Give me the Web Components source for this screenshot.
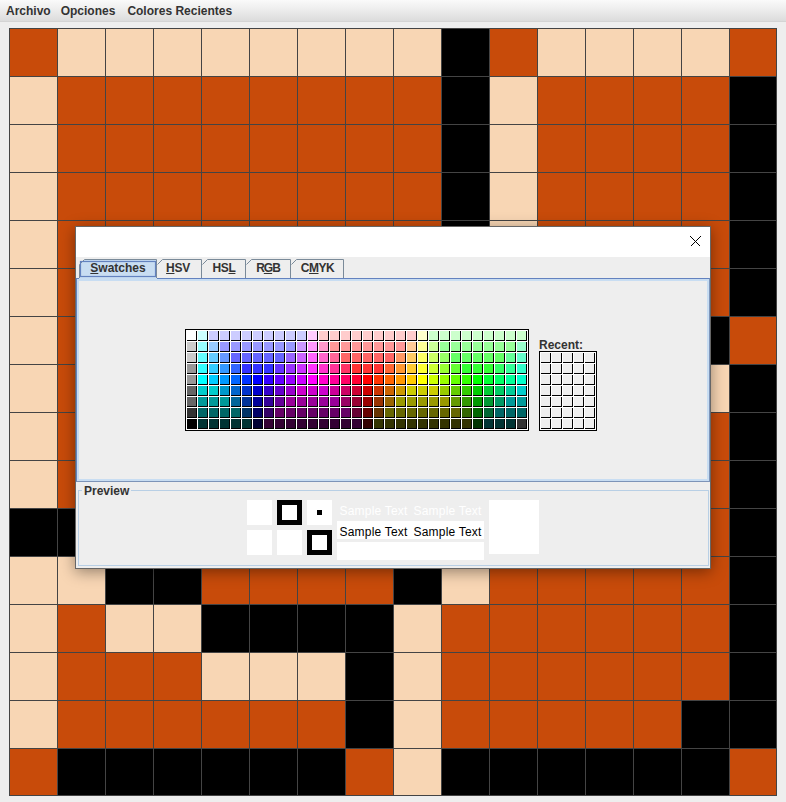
<!DOCTYPE html>
<html lang="es">
<head>
<meta charset="utf-8">
<title>Colores</title>
<style>
  html, body {
    margin: 0;
    background: #eeeeee;
    font-family: "Liberation Sans", Arial, sans-serif;
    font-size: 12px;
    color: #333333;
  }
  body {
    width: 786px;
    height: 802px;
    overflow: hidden;
    position: relative;
  }
</style>
</head>
<body>
  <app-menubar>
    <menu-label>Archivo</menu-label>
    <menu-label>Opciones</menu-label>
    <menu-label style="margin-left: 2px">Colores Recientes</menu-label>
  </app-menubar>

  <pixel-board></pixel-board>

  <color-dialog>
    <color-tabs slot="tabs"></color-tabs>
    <swatch-panel slot="panel"></swatch-panel>
    <color-preview slot="preview"></color-preview>
  </color-dialog>

<script>
  class AppMenubar extends HTMLElement {
    constructor() {
      super()
      this.attachShadow({ mode: "open" })
      this.shadowRoot.innerHTML = `
        <style>
          :host {
            display: flex;
            height: 21px;
            padding-left: 6px;
            gap: 10px;
            align-items: center;
            box-sizing: content-box;
            background: linear-gradient(#fafafa, #f0f0f0 35%, #dcdcdc);
            border-bottom: 1px solid #d4d4d4;
          }
        </style>
        <slot></slot>
      `
    }
  }
  customElements.define("app-menubar", AppMenubar)

  class MenuLabel extends HTMLElement {
    constructor() {
      super()
      this.attachShadow({ mode: "open" })
      this.shadowRoot.innerHTML = `
        <style>
          :host {
            display: block;
            font-weight: bold;
            font-size: 12px;
            color: #333;
          }
        </style>
        <slot></slot>
      `
    }
  }
  customElements.define("menu-label", MenuLabel)

  // O naranja, P crema, K negro. Lo que queda bajo el dialogo va en naranja
  const BOARD = [
    "OPPPPPPPPKOPPPPO",
    "POOOOOOOOKPOOOOK",
    "POOOOOOOOKPOOOOK",
    "POOOOOOOOKPOOOOK",
    "POOOOOOOOKPOOOOK",
    "POOOOOOOOKPOOOOK",
    "POOOOOOOOOOOOOKO",
    "POOOOOOOOOOOOOPK",
    "POOOOOOOOOOOOOOK",
    "POOOOOOOOOOOOOOK",
    "KKOOOOOOOOOOOOOK",
    "PPKKOOOOKPOOOOOK",
    "POPPKKKKPOOOOOOK",
    "POOOPPPKPOOOOOOK",
    "POOOOOOKPOOOOOKK",
    "OKKKKKKOPKKKKKKO"
  ]

  class PixelBoard extends HTMLElement {
    constructor() {
      super()
      this.attachShadow({ mode: "open" })
      let cells = ""
      BOARD.forEach((row, y) => {
        row.split("").forEach((c, x) => {
          const edge = (x === 15 ? " r" : "") + (y === 15 ? " b" : "")
          cells += `<div class="c ${c}${edge}"></div>`
        })
      })
      this.shadowRoot.innerHTML = `
        <style>
          :host {
            display: grid;
            grid-template-columns: repeat(16, 48px);
            grid-auto-rows: 48px;
            margin: 6px 0 0 9px;
            width: 768px;
          }
          .c {
            box-sizing: border-box;
            border-left: 1px solid #444;
            border-top: 1px solid #444;
          }
          .r { border-right: 1px solid #444; }
          .b { border-bottom: 1px solid #444; }
          .O { background: #c84b0a; }
          .P { background: #f8d6b4; }
          .K { background: #000; }
        </style>
        ${cells}
      `
    }
  }
  customElements.define("pixel-board", PixelBoard)

  class ColorDialog extends HTMLElement {
    constructor() {
      super()
      this.attachShadow({ mode: "open" })
      this.shadowRoot.innerHTML = `
        <style>
          :host {
            display: block;
            position: absolute;
            left: 75px;
            top: 226px;
            width: 634px;
            height: 341px;
            border: 1px solid #666;
            background: #eee;
            box-shadow: 0 3px 14px rgba(0, 0, 0, 0.4);
          }
          .title {
            box-sizing: border-box;
            height: 30px;
            background: #fff;
            display: flex;
            justify-content: flex-end;
            align-items: flex-start;
            padding: 9px 9px 0 0;
          }
          svg { display: block; }
        </style>
        <div class="title">
          <svg width="11" height="11" viewBox="0 0 11 11" shape-rendering="crispEdges">
            <path d="M0.5 0.5 L10.5 10.5 M10.5 0.5 L0.5 10.5" stroke="#000" stroke-width="1" fill="none"/>
          </svg>
        </div>
        <slot name="tabs"></slot>
        <slot name="panel"></slot>
        <slot name="preview"></slot>
      `
    }
  }
  customElements.define("color-dialog", ColorDialog)

  class ColorTab extends HTMLElement {
    constructor() {
      super()
      this.attachShadow({ mode: "open" })
    }
    connectedCallback() {
      const w = Number(this.getAttribute("w"))
      const on = this.hasAttribute("selected")
      const h = on ? 22 : 19
      const left = on ? "M0.5 19 L0.5 5.5" : "M0.5 5.5"
      this.shadowRoot.innerHTML = `
        <style>
          :host {
            display: block;
            position: relative;
            width: ${w}px;
            height: ${h}px;
            margin-bottom: ${on ? -3 : 0}px;
            z-index: ${on ? 1 : 0};
          }
          svg { position: absolute; left: 0; top: 0; }
          .t {
            position: relative;
            font-weight: bold;
            font-size: 12px;
            line-height: 19px;
            text-align: center;
            color: #333;
          }
        </style>
        <svg width="${w}" height="${h}">
          <path d="M0 ${h} L0 6 L6 0 L${w} 0 L${w} ${h} Z" fill="${on ? "#c8ddf2" : "#eee"}"/>
          <path d="${left} L5.5 0.5 L${w - 0.5} 0.5 L${w - 0.5} 19" fill="none" stroke="#7a8a99"/>
          ${on ? `<rect x="1.5" y="2.5" width="${w - 3}" height="15" fill="none" stroke="#6382bf" stroke-width="1.2"/>` : ""}
        </svg>
        <div class="t"><slot></slot></div>
      `
    }
  }
  customElements.define("color-tab", ColorTab)

  class ColorTabs extends HTMLElement {
    constructor() {
      super()
      this.attachShadow({ mode: "open" })
      this.shadowRoot.innerHTML = `
        <style>
          :host {
            display: flex;
            align-items: flex-start;
            height: 19px;
            padding: 2px 0 0 3px;
            position: relative;
          }
        </style>
        <color-tab w="78" selected><u>S</u>watches</color-tab>
        <color-tab w="45" style="letter-spacing: -0.3px; text-indent: -3px"><u>H</u>SV</color-tab>
        <color-tab w="44" style="letter-spacing: -0.4px">HS<u>L</u></color-tab>
        <color-tab w="45" style="letter-spacing: -1px; text-indent: -1px">R<u>G</u>B</color-tab>
        <color-tab w="53" style="letter-spacing: -0.5px">C<u>M</u>YK</color-tab>
      `
    }
  }
  customElements.define("color-tabs", ColorTabs)

  // Paleta de swatches, fila a fila, 31 columnas
  function rep(c, n) { return Array(n).fill(c) }
  const PALETTE = [
    ["fff", "cff", ...rep("ccf", 9), "fcf", ...rep("fcc", 9), "ffc", ...rep("cfc", 9)],
    ["ccc", "9ff", "9cf", ...rep("99f", 7), "c9f", "f9f", "f9c", ...rep("f99", 7), "fc9", "ff9", "cf9", ...rep("9f9", 7), "9fc"],
    ["ccc", "6ff", "6cf", "69f", ...rep("66f", 5), "96f", "c6f", "f6f", "f6c", "f69", ...rep("f66", 5), "f96", "fc6", "ff6", "cf6", "9f6", ...rep("6f6", 5), "6f9", "6fc"],
    ["999", "3ff", "3cf", "39f", "36f", ...rep("33f", 3), "63f", "93f", "c3f", "f3f", "f3c", "f39", "f36", ...rep("f33", 3), "f63", "f93", "fc3", "ff3", "cf3", "9f3", "6f3", ...rep("3f3", 3), "3f6", "3f9", "3fc"],
    ["999", "0ff", "0cf", "09f", "06f", "03f", "00f", "30f", "60f", "90f", "c0f", "f0f", "f0c", "f09", "f06", "f03", "f00", "f30", "f60", "f90", "fc0", "ff0", "cf0", "9f0", "6f0", "3f0", "0f0", "0f3", "0f6", "0f9", "0fc"],
    ["666", "0cc", "0cc", "09c", "06c", "03c", "00c", "30c", "60c", "90c", "c0c", "c0c", "c0c", "c09", "c06", "c03", "c00", "c30", "c60", "c90", "cc0", "cc0", "cc0", "9c0", "6c0", "3c0", "0c0", "0c3", "0c6", "0c9", "0cc"],
    ["666", ...rep("099", 3), "069", "039", "009", "309", "609", ...rep("909", 5), "906", "903", "900", "930", "960", ...rep("990", 5), "690", "390", "090", "093", "096", "099", "099"],
    ["333", ...rep("066", 4), "036", "006", "306", ...rep("606", 7), "603", "600", "630", ...rep("660", 7), "360", "060", "063", "066", "066", "066"],
    ["000", ...rep("033", 5), "003", ...rep("303", 9), "300", ...rep("330", 9), "030", "033", "033", "033", "333"]
  ]

  class SwatchGrid extends HTMLElement {
    constructor() {
      super()
      this.attachShadow({ mode: "open" })
    }
    connectedCallback() {
      const cols = Number(this.getAttribute("cols"))
      const rows = Number(this.getAttribute("rows"))
      const flat = this.hasAttribute("palette") ? PALETTE.flat() : rep("eee", cols * rows)
      const cells = flat.map(c => `<i style="background:#${c}"></i>`).join("")
      this.shadowRoot.innerHTML = `
        <style>
          :host {
            display: grid;
            grid-template-columns: repeat(${cols}, 10px);
            grid-auto-rows: 10px;
            gap: 1px;
            background: #fff;
            border: 1px solid #fff;
            outline: 1px solid #000;
            margin: 1px;
          }
          i {
            display: block;
            box-sizing: border-box;
            border-right: 1px solid #000;
            border-bottom: 1px solid #000;
          }
        </style>
        ${cells}
      `
    }
  }
  customElements.define("swatch-grid", SwatchGrid)

  class SwatchPanel extends HTMLElement {
    constructor() {
      super()
      this.attachShadow({ mode: "open" })
      this.shadowRoot.innerHTML = `
        <style>
          :host {
            display: flex;
            box-sizing: border-box;
            height: 204px;
            margin: 0;
            padding-right: 4px;
            justify-content: center;
            align-items: center;
            gap: 10px;
            background: #eee;
            border: 1px solid #6382bf;
            border-right-color: #7d94b8;
            border-bottom-color: #7d94b8;
            box-shadow: inset 0 0 0 2px #c8ddf2;
          }
          .recent {
            display: flex;
            flex-direction: column;
            align-self: flex-end;
            margin-bottom: 50px;
          }
          .label {
            height: 14px;
            font-weight: bold;
            font-size: 12px;
            line-height: 16px;
            color: #333;
          }
        </style>
        <swatch-grid cols="31" rows="9" palette></swatch-grid>
        <div class="recent">
          <div class="label">Recent:</div>
          <swatch-grid cols="5" rows="7"></swatch-grid>
        </div>
      `
    }
  }
  customElements.define("swatch-panel", SwatchPanel)

  class ColorPreview extends HTMLElement {
    constructor() {
      super()
      this.attachShadow({ mode: "open" })
      this.shadowRoot.innerHTML = `
        <style>
          :host {
            display: block;
            padding: 1px 1px 0 2px;
          }
          fieldset {
            box-sizing: border-box;
            height: 83px;
            margin: 0;
            padding: 3px 0 0;
            border: 1px solid #b8cfe5;
            min-width: 0;
          }
          legend {
            margin-left: 3px;
            padding: 0 2px;
            height: 14px;
            font-weight: bold;
            font-size: 12px;
            line-height: 16px;
            color: #333;
          }
          .row {
            display: flex;
            justify-content: center;
            gap: 5px;
            align-items: flex-start;
            padding-right: 2px;
          }
          .squares {
            display: grid;
            grid-template-columns: repeat(3, 25px);
            grid-auto-rows: 25px;
            gap: 5px;
          }
          .s { background: #fff; box-sizing: border-box; }
          .ring { border: 5px solid #000; }
          .dot { display: flex; align-items: center; justify-content: center; }
          .dot b { display: block; width: 5px; height: 5px; background: #000; }
          .text {
            display: flex;
            flex-direction: column;
            gap: 3px;
            width: 147px;
          }
          .line {
            display: flex;
            height: 18px;
            padding-left: 3px;
            font-size: 12px;
            line-height: 23px;
            letter-spacing: 0.2px;
          }
          .line span { flex: none; width: 74px; white-space: nowrap; }
          .w { color: #fff; }
          .k { color: #000; background: #fff; }
          .big { width: 50px; height: 54px; background: #fff; }
        </style>
        <fieldset>
          <legend>Preview</legend>
          <div class="row">
            <div class="squares">
              <div class="s"></div>
              <div class="s ring"></div>
              <div class="s dot"><b></b></div>
              <div class="s"></div>
              <div class="s"></div>
              <div class="s ring"></div>
            </div>
            <div class="text">
              <div class="line w"><span>Sample Text</span><span>Sample Text</span></div>
              <div class="line k"><span>Sample Text</span><span>Sample Text</span></div>
              <div class="line k"></div>
            </div>
            <div class="big"></div>
          </div>
        </fieldset>
      `
    }
  }
  customElements.define("color-preview", ColorPreview)
</script>
</body>
</html>
